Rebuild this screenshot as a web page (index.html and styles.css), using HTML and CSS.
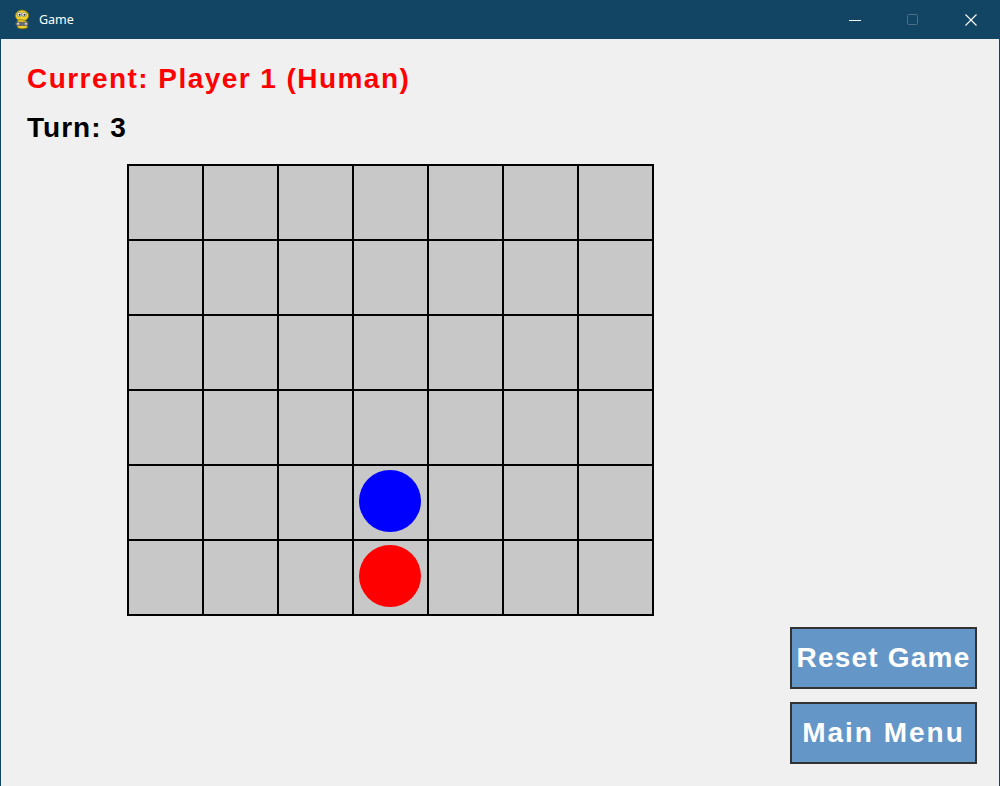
FILE: index.html
```html
<!DOCTYPE html>
<html>
<head>
<meta charset="utf-8">
<link rel="stylesheet" href="styles.css">
</head>
<body>
<div class="window">
  <div class="titlebar">
    <div class="title-left">
      <svg class="app-icon" width="20" height="22" viewBox="0 0 18 20">
        <ellipse cx="9" cy="6" rx="6" ry="5" fill="#f2d22a" stroke="#8a7a10" stroke-width="0.8"/>
        <circle cx="6.5" cy="5" r="2" fill="#fff" stroke="#555" stroke-width="0.5"/>
        <circle cx="11" cy="5" r="2" fill="#fff" stroke="#555" stroke-width="0.5"/>
        <circle cx="6.8" cy="5.2" r="0.9" fill="#222"/>
        <circle cx="11.2" cy="5.2" r="0.9" fill="#222"/>
        <path d="M5 10 Q9 9 13 11 L14 17 Q9 19 5 17 Z" fill="#f2d22a" stroke="#8a7a10" stroke-width="0.8"/>
        <rect x="3" y="11.5" width="12" height="4" rx="2" fill="#6a6a6a"/>
        <circle cx="5.5" cy="13.5" r="1" fill="#ddd"/>
        <circle cx="12.5" cy="13.5" r="1" fill="#ddd"/>
      </svg>
      <span class="title-text">Game</span>
    </div>
    <div class="controls">
      <div class="ctl">
        <svg width="12" height="12" viewBox="0 0 12 12"><path d="M0 6.5 H12" stroke="#fff" stroke-width="1"/></svg>
      </div>
      <div class="ctl">
        <svg width="12" height="12" viewBox="0 0 12 12"><rect x="0.5" y="0.5" width="10" height="10" rx="1" fill="none" stroke="#4b6e86" stroke-width="1"/></svg>
      </div>
      <div class="ctl">
        <svg width="12" height="12" viewBox="0 0 12 12"><path d="M0.5 0.5 L11.5 11.5 M11.5 0.5 L0.5 11.5" stroke="#fff" stroke-width="1.1"/></svg>
      </div>
    </div>
  </div>
  <div class="client">
    <div class="status current">Current: Player 1 (Human)</div>
    <div class="status turn">Turn: 3</div>
    <div class="board" id="board"></div>
    <div class="buttons">
      <div class="btn">Reset Game</div>
      <div class="btn">Main Menu</div>
    </div>
  </div>
</div>
<script>
  var board = document.getElementById('board');
  for (var r = 0; r < 6; r++) {
    for (var c = 0; c < 7; c++) {
      var cell = document.createElement('div');
      cell.className = 'cell';
      if (c === 3 && r === 4) { var d = document.createElement('div'); d.className = 'disc blue'; cell.appendChild(d); }
      if (c === 3 && r === 5) { var d2 = document.createElement('div'); d2.className = 'disc red'; cell.appendChild(d2); }
      board.appendChild(cell);
    }
  }
</script>
</body>
</html>
```

FILE: styles.css
```css
html, body {
  margin: 0;
  padding: 0;
  background: #124563;
}
.window {
  width: 1000px;
  height: 786px;
  display: flex;
  flex-direction: column;
  overflow: hidden;
}
.titlebar {
  height: 39px;
  background: #124563;
  display: flex;
  align-items: center;
  justify-content: space-between;
  flex: none;
}
.title-left {
  display: flex;
  align-items: center;
  padding-left: 12px;
}
.app-icon {
  display: block;
}
.title-text {
  color: #fff;
  font-family: "Noto Sans", "Open Sans", sans-serif;
  font-size: 12.5px;
  margin-left: 7px;
}
.controls {
  display: flex;
  height: 39px;
}
.ctl {
  width: 58px;
  display: flex;
  align-items: center;
  justify-content: center;
}
.client {
  flex: 1;
  background: #f0f0f0;
  margin: 0 1px;
  padding: 24px 0 0 26px;
  display: flex;
  flex-direction: column;
  font-family: "Liberation Sans", Arial, sans-serif;
  font-weight: bold;
}
.status {
  font-size: 28px;
  line-height: 32px;
  letter-spacing: 1.45px;
}
.current {
  color: #ff0000;
}
.turn {
  color: #000;
  margin-top: 17px;
  letter-spacing: 1px;
}
.board {
  margin-top: 20px;
  margin-left: 100px;
  width: 525px;
  display: grid;
  grid-template-columns: repeat(7, 75px);
  grid-auto-rows: 75px;
  border: 1px solid #000;
}
.cell {
  box-sizing: border-box;
  border: 1px solid #000;
  background: #c8c8c8;
  display: flex;
  align-items: center;
  justify-content: center;
}
.disc {
  width: 62px;
  height: 62px;
  margin-right: 2px;
  margin-bottom: 3px;
  border-radius: 50%;
}
.blue { background: #0000ff; }
.red { background: #ff0000; }
.buttons {
  align-self: flex-end;
  margin-top: 11px;
  margin-right: 22px;
  display: flex;
  flex-direction: column;
  gap: 13px;
}
.btn {
  box-sizing: border-box;
  width: 187px;
  height: 62px;
  border: 2px solid #333;
  background: #6496c8;
  color: #fff;
  font-size: 28px;
  letter-spacing: 1.2px;
  display: flex;
  align-items: center;
  justify-content: center;
}
.btn + .btn {
  letter-spacing: 2px;
}
```
